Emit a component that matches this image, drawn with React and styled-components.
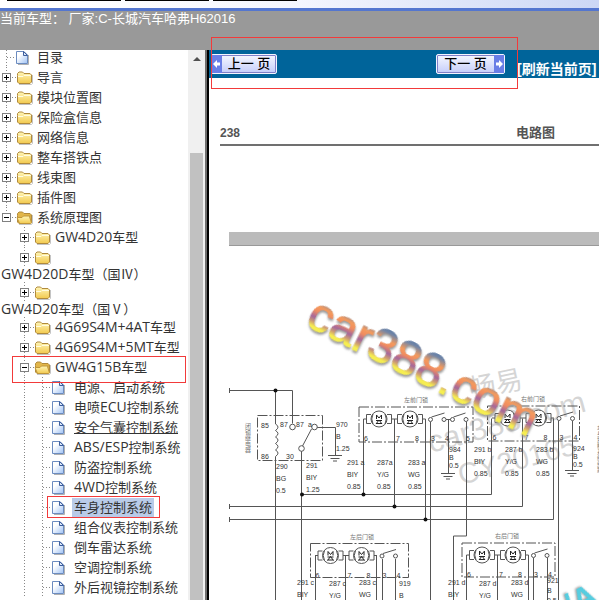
import React from "react";
import styled, { createGlobalStyle, css } from "styled-components";

const GlobalStyle = createGlobalStyle`
  * { box-sizing: border-box; }
  body { margin: 0; background: #fff; font-family: "Liberation Sans", "Noto Sans CJK SC", sans-serif; }
`;

const Page = styled.div`
  display: flex;
  flex-direction: column;
  height: 100vh;
  overflow: hidden;
`;

/* ---------- top area ---------- */
const TabStrip = styled.div`
  display: flex;
  gap: 4px;
  height: 11px;
  flex: none;
  padding-left: 7px;
  background: linear-gradient(90deg, #fff 10%, #f4f6fe 50%, #ccd7f5);
  border-bottom: 3px solid #5476cf;
`;
const TabEdge = styled.div`
  width: ${(p) => p.$w}px;
  height: 1px;
  background: #000;
`;
const ModelBar = styled.header`
  flex: none;
  height: 39px;
  background: #999;
  color: #fff;
  font-size: 13px;
  line-height: 15px;
  white-space: pre;
`;
const Main = styled.div`
  flex: 1;
  min-height: 0;
  display: flex;
  position: relative;
`;

/* ---------- tree ---------- */
const Sidebar = styled.nav`
  flex: none;
  display: flex;
  width: 209px;
  border-right: 2px solid #000;
  overflow: hidden;
`;
const Tree = styled.ul`
  flex: 1;
  min-width: 0;
  margin: -3px 0 0;
  padding: 0;
  list-style: none;
  font-family: "Open Sans", "Noto Sans CJK SC", sans-serif;
  font-size: 13px;
  color: #333;
`;
const dotsY = css`
  background: repeating-linear-gradient(180deg, #888 0 1px, transparent 1px 3px) 6px 0 / 1px 100% no-repeat;
`;
const Node = styled.li`
  position: relative;
`;
const Row = styled.div`
  display: flex;
  align-items: center;
  height: 20px;
  white-space: nowrap;
`;
const Guide = styled.span`
  flex: none;
  align-self: stretch;
  width: 18px;
  ${(p) => p.$line && dotsY}
`;
const Joint = styled.span`
  flex: none;
  align-self: stretch;
  display: flex;
  align-items: center;
  width: 16px;
  padding-left: 2px;
  ${dotsY}
  ${(p) => p.$end && css`background-size: 1px 50%;`}
  &::after {
    content: "";
    flex: 1;
    height: 1px;
    margin-left: ${(p) => (p.$leaf ? 5 : 1)}px;
    background: repeating-linear-gradient(90deg, #888 0 1px, transparent 1px 3px);
  }
`;
const Toggle = styled.button`
  display: block;
  width: 9px;
  height: 9px;
  padding: 0;
  border: 1px solid #808080;
  background:
    linear-gradient(#000, #000) center / 5px 1px no-repeat,
    linear-gradient(#000, #000) center / ${(p) => (p.$open ? 0 : 1)}px 5px no-repeat,
    #fff;
`;
const Label = styled.a`
  margin-left: ${(p) => (p.$leaf ? 2 : 1)}px;
  padding: 0 2px;
  color: inherit;
  line-height: 19px;
  text-decoration: ${(p) => (p.$underline ? "underline" : "none")};
  background: ${(p) => (p.$current ? "#b9cbe8" : "transparent")};
`;
const WrappedLabel = styled.a`
  display: block;
  padding-left: 1px;
  color: inherit;
  text-decoration: none;
  line-height: 15px;
`;
const Latin = styled.span`
  font-size: 14px;
  line-height: 1;
`;
const Marker = styled.div`
  position: absolute;
  z-index: 2;
  top: -1px;
  left: ${(p) => p.$left}px;
  width: ${(p) => p.$w}px;
  height: ${(p) => p.$h}px;
  border: 1px solid #f23a3a;
  pointer-events: none;
`;
const ScrollTrack = styled.div`
  flex: none;
  display: flex;
  flex-direction: column;
  align-items: center;
  width: 19px;
  background: #f0f0f0;
  border-right: 2px solid #6e6e6e;
`;
const ScrollArrow = styled.span`
  margin-top: 7px;
  margin-bottom: 92px;
  border: 4px solid transparent;
  border-top: 0;
  border-bottom-color: #505050;
`;
const ScrollThumb = styled.span`
  flex: 1;
  width: 13px;
  background: #c1c1c1;
`;
const Icon = styled.svg`
  flex: none;
  display: block;
  width: 18px;
  height: 18px;
`;

function Folder({ open }) {
  return (
    <Icon viewBox="0 0 18 18" aria-hidden="true">
      <defs>
        <linearGradient id="folderFill" x1="0" y1="0" x2="0" y2="1">
          <stop offset="0" stopColor="#fff6b8" />
          <stop offset="1" stopColor="#f2c94e" />
        </linearGradient>
      </defs>
      <path d="M3 16.500h12.500l1-1V7" fill="none" stroke="#c4c4c4" />
      <path
        d="M1.500 7.500V5.500l1.500-1.500h3.500l1.500 1.500h6l1.500 1.500v7l-1.500 1.500H3L1.500 14z"
        fill={open ? "#e2b64a" : "url(#folderFill)"}
        stroke="#b08a3c"
      />
      {open ? (
        <path d="M1 9.500h5l1.500-1.500h7l-1 .500 2 6.500-1 .500H3.500z" fill="url(#folderFill)" stroke="#c0963a" />
      ) : (
        <path d="M2 8.500h5l1-1h7" fill="none" stroke="#fffbe0" />
      )}
    </Icon>
  );
}
function Sheet() {
  return (
    <Icon viewBox="0 0 18 18" aria-hidden="true">
      <defs>
        <linearGradient id="sheetFill" x1="0" y1="0" x2="1" y2="1">
          <stop offset=".3" stopColor="#fff" />
          <stop offset="1" stopColor="#9fc2f4" />
        </linearGradient>
      </defs>
      <path d="M2 16.500h10.500V7" fill="none" stroke="#b0b0b0" />
      <path d="M.5 3.500h7.500l3.500 3.500v8.500H.5z" fill="url(#sheetFill)" stroke="#6c8cc0" />
      <path d="M7.500 3.500V7.500H11.500z" fill="#dbe8fa" stroke="#3f5f9d" />
    </Icon>
  );
}

const NODES = [
  { level: 0, leaf: true, text: "目录" },
  { level: 0, text: "导言" },
  { level: 0, text: "模块位置图" },
  { level: 0, text: "保险盒信息" },
  { level: 0, text: "网络信息" },
  { level: 0, text: "整车搭铁点" },
  { level: 0, text: "线束图" },
  { level: 0, text: "插件图" },
  { level: 0, text: "系统原理图", open: true, end: true },
  { level: 1, text: "GW4D20车型" },
  { level: 1, text: "GW4D20D车型（国Ⅳ）", wrapped: true },
  { level: 1, text: "GW4D20车型（国Ⅴ）", wrapped: true },
  { level: 1, text: "4G69S4M+4AT车型" },
  { level: 1, text: "4G69S4M+5MT车型" },
  { level: 1, text: "GW4G15B车型", open: true, marker: [12, 174, 27] },
  { level: 2, leaf: true, text: "电源、启动系统" },
  { level: 2, leaf: true, text: "电喷ECU控制系统" },
  { level: 2, leaf: true, text: "安全气囊控制系统", underline: true },
  { level: 2, leaf: true, text: "ABS/ESP控制系统" },
  { level: 2, leaf: true, text: "防盗控制系统" },
  { level: 2, leaf: true, text: "4WD控制系统" },
  { level: 2, leaf: true, text: "车身控制系统", current: true, marker: [47, 113, 22] },
  { level: 2, leaf: true, text: "组合仪表控制系统" },
  { level: 2, leaf: true, text: "倒车雷达系统" },
  { level: 2, leaf: true, text: "空调控制系统" },
  { level: 2, leaf: true, text: "外后视镜控制系统" },
];

/* model codes are set one size larger than the Chinese text around them */
function MixedText({ text }) {
  return text
    .split(/([\w+/]+)/)
    .filter(Boolean)
    .map((part) => (/^[\w+/]/.test(part) ? <Latin key={part}>{part}</Latin> : part));
}

function TreeNode({ node }) {
  return (
    <Node>
      <Row>
        {node.level > 0 && <Guide />}
        {node.level > 1 && <Guide $line />}
        <Joint $leaf={node.leaf} $end={node.end}>
          {!node.leaf && <Toggle $open={node.open} aria-label={(node.open ? "收起 " : "展开 ") + node.text} />}
        </Joint>
        {node.leaf ? <Sheet /> : <Folder open={node.open} />}
        {!node.wrapped && (
          <Label href="#" $leaf={node.leaf && node.level > 0} $underline={node.underline} $current={node.current}>
            <MixedText text={node.text} />
          </Label>
        )}
      </Row>
      {node.wrapped && (
        <WrappedLabel href="#">
          <MixedText text={node.text} />
        </WrappedLabel>
      )}
      {node.marker && <Marker $left={node.marker[0]} $w={node.marker[1]} $h={node.marker[2]} />}
    </Node>
  );
}

/* ---------- document pane ---------- */
const Content = styled.main`
  position: relative;
  flex: 1;
  min-width: 0;
  display: flex;
  flex-direction: column;
`;
const Toolbar = styled.div`
  display: flex;
  align-items: center;
  flex: none;
  height: 28px;
  padding-left: 2px;
  background: #00649a;
`;
const PageButton = styled.button`
  display: flex;
  align-items: stretch;
  flex: none;
  width: ${(p) => p.$w}px;
  height: 20px;
  padding: 0;
  margin-right: ${(p) => p.$after}px;
  border: 1px solid #f4f5ff;
  border-radius: 2px;
  background: linear-gradient(#f6f8ff, #c5cdfa);
  box-shadow: inset 0 0 0 1px #8080c8;
  font: 500 13px/18px "Liberation Sans", "Noto Sans CJK SC", sans-serif;
  color: #000;
`;
const ButtonText = styled.span`
  flex: 1;
  text-align: center;
  white-space: pre;
`;
const ArrowBox = styled.svg`
  flex: none;
  width: 10px;
  height: 18px;
  background: #6a7ee6;
`;
const Refresh = styled.a`
  align-self: flex-end;
  color: #fff;
  font-size: 14px;
  font-weight: bold;
  line-height: 18px;
  text-decoration: none;
  white-space: nowrap;
`;
const ToolbarMarker = styled.div`
  position: absolute;
  z-index: 3;
  top: -13px;
  left: 2px;
  width: 307px;
  height: 52px;
  border: 1px solid #f23a3a;
  pointer-events: none;
`;
const SheetHead = styled.div`
  display: flex;
  justify-content: space-between;
  align-items: center;
  margin: 45px 0 0 11px;
  padding: 0 44px 1px 0;
  border-bottom: 2px solid #707070;
  color: #555;
  font: bold 13px/20px "Liberation Sans", "Noto Sans CJK SC", sans-serif;
`;
const PageNo = styled.span`
  font-size: 12px;
`;
const PageBreak = styled.div`
  flex: none;
  height: 14px;
  margin: 86px 0 0 20px;
  background: #bbb;
  border-bottom: 1px solid #999;
`;
const Schematic = styled.svg`
  flex: none;
  display: block;
  width: 390px;
  height: 354px;
  overflow: hidden;
`;
const Wires = styled.g`
  fill: none;
  stroke: #555;
  stroke-width: 1;
`;
const Pins = styled.g`
  fill: #333;
  font: 7px "Liberation Sans", sans-serif;
`;
const Caption = styled.text`
  fill: #777;
  font: 6px "Noto Sans CJK SC", sans-serif;
`;
const GreyMark = styled.g`
  fill: #c8c8c8;
  fill-opacity: 0.75;
  font-family: "Liberation Sans", "Noto Sans CJK SC", sans-serif;
`;
const ColourMark = styled.text`
  font: 48px "Liberation Sans", sans-serif;
  fill: url(#markFill);
  stroke: url(#markFill);
  stroke-width: 1;
  filter: drop-shadow(1px 2px 1px #999);
`;
const CyanMark = styled.text`
  font: bold 32px "Liberation Sans", sans-serif;
  fill: #55cde0;
  filter: drop-shadow(-1px -1px 1px #999);
`;

function Motor({ x, y }) {
  return (
    <>
      <path d={`M${x - 8} ${y - 4.5}h-4.500v9h4.500M${x + 8} ${y - 4.5}h4.500v9h-4.500`} />
      <circle cx={x} cy={y} r="8" fill="#fff" />
      <path d={`M${x - 6} ${y - 5}q-2.500 5 0 10M${x + 6} ${y - 5}q2.500 5 0 10`} />
      <path
        stroke="#222"
        d={`M${x - 2.5} ${y}v-4l2.500 3 2.500-3v4M${x - 3} ${y + 1.5}h6M${x - 3} ${y + 5}l3-4 3 4M${x - 3} ${y + 4.5}h6`}
      />
    </>
  );
}
function Ground({ x, y }) {
  return <path d={`M${x - 7} ${y}h14M${x - 4.5} ${y + 3}h9M${x - 2} ${y + 5.5}h4`} />;
}
function Stack({ x, y, step = 12, lines }) {
  return lines.map((t, i) => (
    <text key={t} x={x} y={y + i * step}>{t}</text>
  ));
}

/* x, y: centre of the first motor */
function DoorLock({ x, y, w, h, title, titleX, double }) {
  const s = x + 51.5;
  return (
    <>
      <Wires>
        <rect x={x - 20} y={y - 12} width={w} height={h} strokeDasharray="10 2 2 2" />
        <path d={`M${x - 15.5} ${y}h3M${x + 12.5} ${y}h6M${x + 43.5} ${y}h3`} />
        <Motor x={x} y={y} />
        <Motor x={x + 31} y={y} />
        <path d={`M${s + 1} ${y - 2}l13-4`} />
        <circle cx={s} cy={y + 0.5} r="2" fill="#fff" />
        <circle cx={s + 13.5} cy={y + 0.5} r="2" fill="#fff" />
        {double && (
          <>
            <path d={`M${s + 15.5} ${y + 0.5}h5M${s + 23} ${y - 2}l12-4`} />
            <circle cx={s + 22} cy={y + 0.5} r="2" fill="#fff" />
            <circle cx={s + 35.5} cy={y + 0.5} r="2" fill="#fff" />
          </>
        )}
      </Wires>
      <Pins>
        <text x={x - 15} y={y + 22}>6</text>
        <text x={x + 17} y={y + 22}>7</text>
        <text x={x + 36} y={y + 22}>8</text>
        <text x={x + 52} y={y + 22}>3</text>
        <text x={x + 66} y={y + 22}>4</text>
        {double && <text x={x + 87} y={y + 22}>5</text>}
      </Pins>
      <Caption x={titleX} y={y - 17}>{title}</Caption>
    </>
  );
}

function WiringDiagram() {
  return (
    <Schematic viewBox="209 246 390 354" role="img" aria-label="电路图">
      <defs>
        <linearGradient id="markFill" gradientUnits="userSpaceOnUse" x1="0" y1="-35" x2="0" y2="0">
          <stop offset="0" stopColor="#5878a4" />
          <stop offset=".12" stopColor="#7386a6" />
          <stop offset=".34" stopColor="#f59a5c" />
          <stop offset=".48" stopColor="#f08c60" />
          <stop offset=".66" stopColor="#a4669c" />
          <stop offset=".8" stopColor="#d0a070" />
          <stop offset=".92" stopColor="#f6ee50" />
        </linearGradient>
      </defs>
      <GreyMark>
        <text transform="translate(471 399) rotate(-12)" fontSize="27">畅易</text>
        <text transform="translate(431 453) rotate(-15)" fontSize="31">car388.com</text>
        <text transform="translate(461 485) rotate(-15)" fontSize="29">CY20165</text>
      </GreyMark>
      <Wires>
        <path d="M229.500 388v5M229.500 390.500h63v33M275.500 390.500V424q5 3 0 6.500q5 3 0 6.500q5 3 0 6.500q5 3 0 6.500q5 3 0 6.500V600" />
        <rect x="257.500" y="415.500" width="65" height="45" strokeDasharray="10 2 2 2" />
        <path d="M317 427.500h18.500v28M311.500 429l-9 17M301.500 451v149" />
        <Ground x={335} y={455.5} />
        <circle cx="292.500" cy="427" r="2.800" fill="#fff" />
        <circle cx="314.500" cy="427" r="2.800" fill="#fff" />
        <circle cx="301.500" cy="448.500" r="2.800" fill="#fff" />
        <path d="M301.500 494.500h190V418.500M229.500 504v5M229.500 506.500h293V418.500M229.500 517v5M229.500 519.500h324V418.500" />
        <path d="M363.500 419v75M394.500 419v87M425.500 419v100M430.500 422v178M448.500 420v53M466.500 422v114h-13v64M558.500 421v179M572.500 421v49" />
        <Ground x={448} y={473.5} />
        <Ground x={572} y={470.5} />
        <path d="M315.500 556v44M345.500 556v44M376.500 556v44M382.500 559v41M395.500 559v41M466.500 555v45M497.500 555v45M528.500 555v45M533.500 558v42M547.500 558v42" />
      </Wires>
      <g fill="#111">
        <circle cx="275.500" cy="390.500" r="2" />
        <circle cx="302" cy="494.500" r="2" />
        <circle cx="363.500" cy="494.500" r="2" />
        <circle cx="394.500" cy="506.500" r="2" />
        <circle cx="425.500" cy="519.500" r="2" />
      </g>
      <DoorLock x={379} y={419} w={114} h={35} title="左前门锁" titleX={404} double />
      <DoorLock x={507.500} y={418} w={92} h={35} title="右前门锁" titleX={521} />
      <DoorLock x={330.500} y={555.500} w={98} h={34} title="左后门锁" titleX={350} />
      <DoorLock x={482} y={555} w={93} h={34} title="右后门锁" titleX={495} />
      <Pins>
        <Stack x={261} y={428} step={31} lines={["85", "86"]} />
        <text x="280" y="427">87</text>
        <text x="296" y="427">87</text>
        <text x="308" y="427">a</text>
        <text x="286" y="459">30</text>
        <Stack x={336} y={427} lines={["970", "B", "1.25"]} />
        <Stack x={276} y={469} lines={["290", "BG", "0.5"]} />
        <Stack x={306} y={468} lines={["291", "BIY", "1.25"]} />
        <Stack x={347} y={465} lines={["291 a", "BIY", "0.85"]} />
        <Stack x={377} y={465} lines={["287a", "Y/G", "0.85"]} />
        <Stack x={408} y={465} lines={["283 a", "WG", "0.85"]} />
        <Stack x={449} y={452} step={8} lines={["984", "B", "0.5"]} />
        <Stack x={474} y={452} lines={["291 b", "BIY", "0.85"]} />
        <Stack x={505} y={452} lines={["287 b", "Y/G", "0.85"]} />
        <Stack x={536} y={452} lines={["283 b", "WG", "0.85"]} />
        <Stack x={573} y={451} step={8} lines={["924", "B", "0.5"]} />
        <Stack x={297} y={585} lines={["291 c", "BIY"]} />
        <Stack x={329} y={586} lines={["287 c", "Y/G"]} />
        <Stack x={359} y={585} lines={["283 c", "WG"]} />
        <Stack x={399} y={586} lines={["919", "B"]} />
        <Stack x={448} y={585} lines={["291 d", "BIY"]} />
        <Stack x={479} y={586} lines={["287 d", "Y/G"]} />
        <Stack x={511} y={585} lines={["283 d", "WG"]} />
        <Stack x={547} y={583} step={10} lines={["921", "B", "0.5"]} />
      </Pins>
      {Array.from("闭锁继电器").map((c, i) => (
        <Caption key={c} x="245" y={428 + i * 6}>{c}</Caption>
      ))}
      {Array.from("车身控制系统线路").map((c, i) => (
        <Caption key={c} x="597" y={430 + i * 6}>{c}</Caption>
      ))}
      <ColourMark transform="translate(304 325) rotate(26.500)">car388.com</ColourMark>
      <CyanMark transform="translate(571 617) rotate(-28)">/A</CyanMark>
    </Schematic>
  );
}

export default function App() {
  return (
    <Page>
      <GlobalStyle />
      <TabStrip>
        <TabEdge $w={114} />
        <TabEdge $w={84} />
        <TabEdge $w={84} />
      </TabStrip>
      <ModelBar>当前车型： 厂家:C-长城汽车哈弗H62016</ModelBar>
      <Main>
        <Sidebar>
          <Tree>
            {NODES.map((n) => (
              <TreeNode key={n.text} node={n} />
            ))}
          </Tree>
          <ScrollTrack>
            <ScrollArrow />
            <ScrollThumb />
          </ScrollTrack>
        </Sidebar>
        <Content>
          <Toolbar>
            <PageButton $w={66} $after={159}>
              <ArrowBox viewBox="0 0 10 18" aria-hidden="true">
                <path d="M1 9l4-4v2.500h3v3H5V13z" fill="#fff" />
              </ArrowBox>
              <ButtonText>上一 页</ButtonText>
            </PageButton>
            <PageButton $w={69} $after={12}>
              <ButtonText>下一 页</ButtonText>
              <ArrowBox viewBox="0 0 10 18" aria-hidden="true">
                <path d="M9 9L5 5v2.500H2v3h3V13z" fill="#fff" />
              </ArrowBox>
            </PageButton>
            <Refresh href="#">[刷新当前页]</Refresh>
          </Toolbar>
          <SheetHead>
            <PageNo>238</PageNo>
            <span>电路图</span>
          </SheetHead>
          <PageBreak />
          <WiringDiagram />
          <ToolbarMarker />
        </Content>
      </Main>
    </Page>
  );
}
